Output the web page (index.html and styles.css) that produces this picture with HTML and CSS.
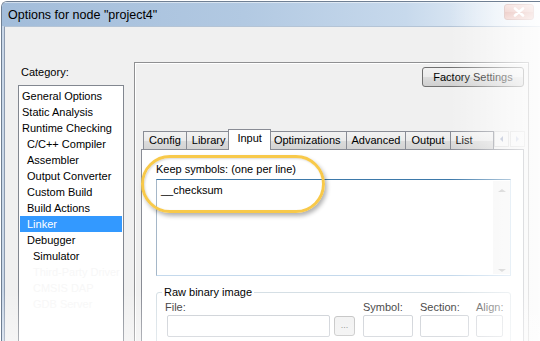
FILE: index.html
```html
<!DOCTYPE html>
<html lang="en">
<head>
  <meta charset="UTF-8" />
  <title>Options for node "project4"</title>
  <link rel="stylesheet" href="styles.css">
</head>
<body>
  <div class="window">
    <div class="titlebar">
      <span class="title">Options for node "project4"</span>
      <span class="close">
        <svg width="14" height="10" viewBox="0 0 14 10">
          <path d="M3 1.5L11 8.5M11 1.5L3 8.5" stroke="#fff" stroke-width="2.6" stroke-linecap="round"/>
        </svg>
      </span>
    </div>
    <div class="frame">
      <div class="client">
        <div class="category">
          <div class="cat-label">Category:</div>
          <ul class="cat-list">
            <li>General Options</li>
            <li>Static Analysis</li>
            <li>Runtime Checking</li>
            <li class="sub">C/C++ Compiler</li>
            <li class="sub">Assembler</li>
            <li class="sub">Output Converter</li>
            <li class="sub">Custom Build</li>
            <li class="sub">Build Actions</li>
            <li class="sub selected">Linker</li>
            <li class="sub">Debugger</li>
            <li class="subsub">Simulator</li>
            <li class="subsub faded">Third-Party Driver</li>
            <li class="subsub faded">CMSIS DAP</li>
            <li class="subsub faded">GDB Server</li>
          </ul>
        </div>

        <div class="panel">
          <div class="panel-top">
            <button class="factory">Factory Settings</button>
          </div>
          <div class="tabs">
            <span class="tab">Config</span>
            <span class="tab">Library</span>
            <span class="tab active">Input</span>
            <span class="tab">Optimizations</span>
            <span class="tab">Advanced</span>
            <span class="tab">Output</span>
            <span class="tab tab-list">List</span>
            <span class="tab-scroll">
              <span class="arrow-btn"><span class="arrow left"></span></span>
              <span class="arrow-btn"><span class="arrow right"></span></span>
            </span>
          </div>
          <div class="tab-page">
            <div class="field-label">Keep symbols: (one per line)</div>
            <div class="symbols">
              <div class="symbols-text">__checksum</div>
              <div class="vscroll">
                <span class="arrow up"></span>
                <span class="arrow down"></span>
              </div>
            </div>

            <fieldset class="raw">
              <legend>Raw binary image</legend>
              <div class="raw-row">
                <div class="raw-field file">
                  <span class="raw-label">File:</span>
                  <span class="raw-input"></span>
                </div>
                <span class="browse">...</span>
                <div class="raw-field symbol">
                  <span class="raw-label">Symbol:</span>
                  <span class="raw-input"></span>
                </div>
                <div class="raw-field section">
                  <span class="raw-label">Section:</span>
                  <span class="raw-input"></span>
                </div>
                <div class="raw-field align">
                  <span class="raw-label">Align:</span>
                  <span class="raw-input"></span>
                </div>
              </div>
            </fieldset>

            <div class="highlight"></div>
          </div>
        </div>
      </div>
    </div>
    <div class="fade-right"></div>
    <div class="fade-bottom"></div>
  </div>
</body>
</html>
```

FILE: styles.css
```css
* {
  box-sizing: border-box;
}

body {
  margin: 0;
  background: #ffffff;
  font-family: "Liberation Sans", Tahoma, sans-serif;
  font-size: 11px;
  color: #000000;
}

.window {
  position: relative;
  width: 539px;
  height: 340px;
  margin: 1px 0 0 1px;
  border-left: 1px solid #6f7f93;
  border-top: 1px solid #6f7f93;
  border-top-left-radius: 6px;
  overflow: hidden;
  display: flex;
  flex-direction: column;
}

/* title bar */
.titlebar {
  height: 24px;
  flex-shrink: 0;
  display: flex;
  align-items: center;
  justify-content: space-between;
  padding: 0 6px 0 6px;
  background: linear-gradient(to right, #a3bdda 0%, #b2c9e2 45%, #c7d9ec 75%, #f4f8fc 100%);
  box-shadow: inset 0 1px 0 rgba(255,255,255,0.5);
}

.title {
  font-size: 12.5px;
  color: #000;
  margin-top: 1px;
}

.close {
  width: 30px;
  height: 16px;
  margin-top: -4px;
  display: flex;
  align-items: center;
  justify-content: center;
  border: 1px solid #c89a94;
  border-radius: 3px;
  background: linear-gradient(to bottom, #efc8c2 0%, #e3aba3 50%, #d8958b 51%, #e9b8b0 100%);
}

/* window frame and client */
.frame {
  flex: 1;
  display: flex;
  background: #c9d7e8;
  padding-left: 2px;
}

.client {
  flex: 1;
  display: flex;
  align-items: flex-start;
  background: #f0f0f0;
  border-left: 1px solid #8d9bb0;
  border-top: 1px solid #b4c4d6;
  padding: 35px 0 0 13px;
}

/* category list */
.category {
  width: 106px;
  flex-shrink: 0;
  margin-top: 4px;
}

.cat-label {
  height: 13px;
  line-height: 13px;
  padding-left: 3px;
  margin-bottom: 6px;
}

.cat-list {
  list-style: none;
  margin: 0;
  padding: 2px 1px 1px 1px;
  background: #ffffff;
  border: 1px solid #828790;
  height: 260px;
}

.cat-list li {
  height: 16px;
  line-height: 16px;
  padding-left: 2px;
  white-space: nowrap;
}

.cat-list li.sub {
  padding-left: 7px;
}

.cat-list li.subsub {
  padding-left: 13px;
}

.cat-list li.selected {
  background: #3399ff;
  color: #ffffff;
}

.cat-list li.faded {
  color: #f7f7f7;
}

/* options panel */
.panel {
  width: 395px;
  height: 300px;
  margin-left: 10px;
  border: 1px solid #8f9092;
  box-shadow: inset 1px 1px 0 #ffffff;
  background: #f0f0f0;
}

.panel-top {
  display: flex;
  justify-content: flex-end;
  padding: 4px 4px 0 0;
}

.factory {
  width: 102px;
  height: 20px;
  font-family: "Liberation Sans", Tahoma, sans-serif;
  font-size: 11px;
  color: #000;
  border: 1px solid #707070;
  border-radius: 3px;
  background: linear-gradient(to bottom, #f2f2f2 0%, #ebebeb 50%, #dddddd 51%, #cfcfcf 100%);
  padding: 0;
}

/* tabs */
.tabs {
  display: flex;
  align-items: flex-end;
  height: 20px;
  margin: 42px 0 0 8px;
  position: relative;
  z-index: 2;
}

.tab {
  height: 18px;
  line-height: 17px;
  padding: 0 5px;
  border: 1px solid #898c95;
  border-bottom: none;
  border-right: none;
  background: linear-gradient(to bottom, #f2f2f2 0%, #ebebeb 50%, #dcdcdc 51%, #d3d3d3 100%);
  white-space: nowrap;
}

.tab.active {
  height: 21px;
  margin: 0 -2px -1px -2px;
  padding: 0 8px 0 8px;
  line-height: 17px;
  background: #ffffff;
  border-right: 1px solid #898c95;
  position: relative;
  z-index: 3;
}

.tab.active + .tab {
  border-left: none;
  padding-left: 5px;
}

.tab-list {
  width: 44px;
  border-right: 1px solid #898c95;
}

.tab-scroll {
  display: flex;
  gap: 1px;
  height: 16px;
  margin: 0 0 2px 0;
  align-self: flex-end;
}

.arrow-btn {
  width: 15px;
  height: 16px;
  border: 1px solid #d6d6d6;
  background: #f4f4f4;
  display: flex;
  align-items: center;
  justify-content: center;
}

.arrow {
  width: 0;
  height: 0;
  border: 3px solid transparent;
}

.arrow.left {
  border-right: 3px solid #9aa5c2;
  border-left: none;
}

.arrow.right {
  border-left: 3px solid #c3cbe0;
  border-right: none;
}

/* tab page */
.tab-page {
  position: relative;
  width: 383px;
  height: 230px;
  margin-left: 6px;
  background: #ffffff;
  border: 1px solid #898c95;
  padding: 13px 0 0 14px;
}

.field-label {
  height: 13px;
  line-height: 13px;
}

.symbols {
  display: flex;
  justify-content: space-between;
  width: 355px;
  height: 97px;
  margin-top: 3px;
  border: 1px solid #c4d9ec;
  border-top: 1px solid #3d79aa;
  border-left: 1px solid #a5b7c8;
}

.symbols-text {
  padding: 4px 0 0 4px;
  line-height: 13px;
}

.vscroll {
  width: 17px;
  margin: 1px 0 1px 0;
  background: #f4f4f4;
  display: flex;
  flex-direction: column;
  justify-content: space-between;
  align-items: center;
  padding: 8px 0 2px 0;
}

.arrow.up {
  border-bottom: 3px solid #b8b8b8;
  border-top: none;
  border-left-width: 4px;
  border-right-width: 4px;
}

.arrow.down {
  border-top: 3px solid #b8b8b8;
  border-bottom: none;
  border-left-width: 4px;
  border-right-width: 4px;
}

/* raw binary image group */
.raw {
  width: 355px;
  margin: 10px 0 0 0;
  padding: 0 0 0 5px;
  border: 1px solid #d5dfe5;
  border-radius: 3px;
  height: 80px;
}

.raw legend {
  padding: 0 2px;
  line-height: 13px;
}

.raw-row {
  display: flex;
  align-items: flex-start;
  margin-top: 2px;
}

.raw-field {
  display: flex;
  flex-direction: column;
}

.raw-label {
  height: 14px;
  line-height: 13px;
  color: #333;
}

.raw-input {
  height: 22px;
  border: 1px solid #c9cdd3;
  border-radius: 2px;
  background: #ffffff;
}

.file {
  margin-left: 5px;
}

.file .raw-label {
  margin-left: -2px;
}

.file .raw-input {
  width: 163px;
}

.browse {
  width: 21px;
  height: 20px;
  margin: 15px 0 0 4px;
  border: 1px solid #bcbcbc;
  border-radius: 3px;
  background: #f0f0f0;
  color: #777;
  font-size: 9px;
  text-align: center;
  line-height: 16px;
}

.symbol {
  margin-left: 8px;
}

.symbol .raw-input {
  width: 50px;
}

.section {
  margin-left: 7px;
}

.section .raw-input {
  width: 49px;
}

.align {
  margin-left: 7px;
}

.align .raw-input {
  width: 27px;
}

/* callout around the keep-symbols box */
.highlight {
  position: absolute;
  left: -1px;
  top: 5px;
  width: 184px;
  height: 58px;
  border: 3.5px solid #f8c94a;
  border-radius: 29px;
  box-shadow: 2px 3px 4px rgba(0,0,0,0.3), inset 1px 1px 2px rgba(0,0,0,0.15);
  z-index: 5;
}

/* fade-out edges of the screenshot */
.fade-right {
  position: absolute;
  top: 0;
  right: 0;
  width: 90px;
  height: 100%;
  background: linear-gradient(to right, rgba(255,255,255,0) 0%, rgba(255,255,255,0.55) 60%, rgba(255,255,255,0.85) 100%);
  z-index: 10;
}

.fade-bottom {
  position: absolute;
  left: 0;
  bottom: 0;
  width: 100%;
  height: 50px;
  background: linear-gradient(to bottom, rgba(255,255,255,0) 0%, rgba(255,255,255,0.35) 100%);
  z-index: 10;
}
```
